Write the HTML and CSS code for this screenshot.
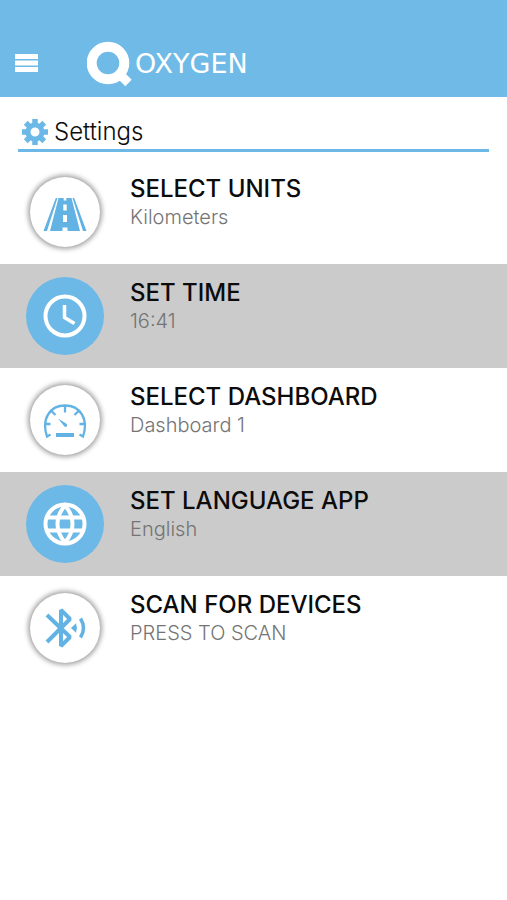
FILE: index.html
```html
<!DOCTYPE html>
<html lang="en">
<head>
<meta charset="utf-8">
<meta name="viewport" content="width=device-width, initial-scale=1">
<title>Settings</title>
<link rel="stylesheet" href="styles.css">
</head>
<body>
<header class="topbar">
  <button class="menu" type="button" aria-label="Menu">
    <svg width="23" height="20" viewBox="0 0 23 20" fill="#fff"><path d="M0 0h23v5H0zM0 6.500h23v5H0zM0 13h23v5H0z"/></svg>
  </button>
  <div class="brand">
    <svg width="46" height="46" viewBox="0 0 46 46" fill="none" stroke="#fff"><circle cx="21" cy="22" r="16.300" stroke-width="10"/><path d="M32.500 33l9 9" stroke-width="9"/></svg>
    <span class="wordmark">OXYGEN</span>
  </div>
</header>
<main>
  <div class="heading">
    <svg width="26" height="26" viewBox="-13 -13 26 26" fill="none" stroke="#6cb8e6"><circle r="7" stroke-width="5"/><path d="M0-13V-8M0 8v5M-13 0h5M8 0h5M-9.200-9.200l3.600 3.600M5.600 5.600l3.600 3.600M9.200-9.200L5.600-5.600M-5.600 5.600l-3.600 3.600" stroke-width="5.500"/></svg>
    <h1>Settings</h1>
  </div>
  <ul class="options">
    <li><button class="option" type="button">
      <span class="disc"><svg width="44" height="44" viewBox="0 0 44 44"><path fill="#62b3e4" d="M14.500 8h-1.700L.5 41h3.500zM29.500 8h1.700l12.300 33h-3.500zM15.500 8h13l8.500 33H7z"/><path fill="#fff" d="M20.700 8h2.600v2.500h-2.600zM20.300 14.500h3.400v6h-3.400zM20 25h4v7h-4zM19.500 37.500h5V41h-5z"/></svg></span>
      <span class="labels"><span class="name">SELECT UNITS</span><span class="value">Kilometers</span></span>
    </button></li>
    <li><button class="option" type="button">
      <span class="disc filled"><svg width="44" height="44" viewBox="0 0 44 44" fill="none" stroke="#fff" stroke-width="4"><circle cx="22" cy="22" r="19.500"/><path stroke-width="3.500" d="M21.500 11v12.500l10 6"/></svg></span>
      <span class="labels"><span class="name">SET TIME</span><span class="value">16:41</span></span>
    </button></li>
    <li><button class="option" type="button">
      <span class="disc"><svg width="44" height="44" viewBox="0 0 44 44" fill="none" stroke="#62b3e4" stroke-width="2.300"><path d="M7.500 36.500L4 38.500C-2 21 7 7.500 22 7.500S46 21 40 38.500l-3.500-2M22 7.500v7M8.500 13l4 4M35.500 13l-4 4M2.500 26h5M41.500 26h-5"/><path fill="#62b3e4" stroke="none" d="M15 20.500l8.500 5.200q1.500 2.300-.7 3.200-1 0-1.800-.9zM13 35h18v4H13z"/></svg></span>
      <span class="labels"><span class="name">SELECT DASHBOARD</span><span class="value">Dashboard 1</span></span>
    </button></li>
    <li><button class="option" type="button">
      <span class="disc filled"><svg width="44" height="44" viewBox="0 0 44 44" fill="none" stroke="#fff" stroke-width="4"><circle cx="22" cy="22" r="19.500"/><path d="M3.500 15.500h37M3.500 28.500h37"/><path d="M22 3.500C12 15 12 29 22 40.500C32 29 32 15 22 3.500z"/></svg></span>
      <span class="labels"><span class="name">SET LANGUAGE APP</span><span class="value">English</span></span>
    </button></li>
    <li><button class="option" type="button">
      <span class="disc"><svg width="44" height="44" viewBox="0 0 44 44"><path fill="none" stroke="#62b3e4" stroke-width="4" stroke-linejoin="bevel" d="M4 9L27 31 18 40V4L27 13 4 36"/><path fill="#62b3e4" d="M28 22l5-4.700q1.700 4.700 0 9.400z"/><path fill="none" stroke="#62b3e4" stroke-width="3.500" d="M37.500 12.500q6 9.500 0 19"/></svg></span>
      <span class="labels"><span class="name">SCAN FOR DEVICES</span><span class="value">PRESS TO SCAN</span></span>
    </button></li>
  </ul>
</main>
</body>
</html>
```

FILE: styles.css
```css
* {
  box-sizing: border-box;
}

body {
  margin: 0;
  background: #fff;
  color: #0c0c0c;
  font-family: Inter, "Liberation Sans", sans-serif;
}

svg {
  display: block;
  flex: none;
}

button {
  border: 0;
  background: none;
  font: inherit;
  color: inherit;
  cursor: pointer;
}

.topbar {
  display: flex;
  align-items: center;
  gap: 49px;
  height: 97px;
  padding: 31px 15px 0;
  background: #6fbae7;
}

.menu {
  padding: 0;
}

.brand {
  display: flex;
  align-items: center;
  gap: 2px;
}

.wordmark {
  color: #fff;
  font-family: "DejaVu Sans", sans-serif;
  font-size: 27px;
  line-height: 28px;
}

.heading {
  display: flex;
  align-items: center;
  gap: 6px;
  margin: 18px 18px 8px;
  padding: 0 4px 1px;
  border-bottom: 3px solid #6cb8e6;
}

h1 {
  margin: 0;
  font-size: 24px;
  line-height: 33px;
  font-weight: 300;
}

.options {
  margin: 0;
  padding: 0;
  list-style: none;
}

.option {
  display: flex;
  align-items: center;
  gap: 26px;
  width: 100%;
  height: 104px;
  padding: 0 26px;
  text-align: left;
}

.options li:nth-child(even) {
  background: #cbcbcb;
}

.disc {
  display: grid;
  place-items: center;
  flex: none;
  width: 70px;
  height: 70px;
  margin: 4px;
  border-radius: 50%;
  background: #fff;
  box-shadow: 0 0 5px 2px #a0a0a0;
}

.disc.filled {
  width: 78px;
  height: 78px;
  margin: 0;
  background: #6cb9e7;
  box-shadow: none;
}

.labels {
  display: flex;
  flex-direction: column;
  padding-bottom: 18px;
}

.name {
  font-size: 24px;
  line-height: 28px;
  font-weight: 500;
}

.value {
  font-size: 20px;
  line-height: 28px;
  font-weight: 300;
  color: #747474;
}
```
